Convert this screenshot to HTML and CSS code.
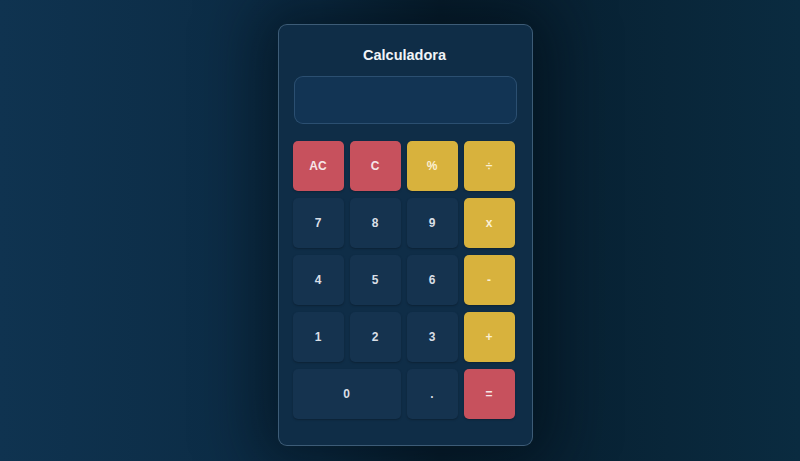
FILE: index.html
```html
<!DOCTYPE html>
<html lang="pt">
<head>
<meta charset="utf-8">
<title>Calculadora</title>
<link rel="stylesheet" href="styles.css">
</head>
<body>
<main class="stage">
  <section class="calc">
    <h1 class="title">Calculadora</h1>
    <div class="display"></div>
    <div class="keys">
      <button class="key red">AC</button>
      <button class="key red">C</button>
      <button class="key yellow">%</button>
      <button class="key yellow">÷</button>
      <button class="key">7</button>
      <button class="key">8</button>
      <button class="key">9</button>
      <button class="key yellow">x</button>
      <button class="key">4</button>
      <button class="key">5</button>
      <button class="key">6</button>
      <button class="key yellow">-</button>
      <button class="key">1</button>
      <button class="key">2</button>
      <button class="key">3</button>
      <button class="key yellow">+</button>
      <button class="key wide">0</button>
      <button class="key">.</button>
      <button class="key red">=</button>
    </div>
  </section>
</main>
</body>
</html>
```
FILE: styles.css
```css
* { box-sizing: border-box; }
html, body { margin: 0; height: 100%; }
body {
  font-family: "Liberation Sans", Arial, sans-serif;
  background: linear-gradient(90deg, #0f3350 0%, #0b2a42 40%, #071d2d 55%, #0a2b40 100%);
  overflow: hidden;
}
.stage {
  height: 461px;
  display: flex;
  justify-content: center;
  align-items: flex-start;
  padding-top: 24px;
  padding-left: 10px;
}
.calc {
  width: 255px;
  height: 422px;
  background: #0f2d47;
  border: 1px solid rgba(150, 180, 210, 0.35);
  border-radius: 9px;
  padding: 14px 15px 16px 14px;
  box-shadow: 0 0 60px 20px rgba(2, 12, 22, 0.55);
}
.title {
  margin: 8px 0 12px;
  text-align: center;
  color: #f1f4f7;
  font-size: 14.5px;
  font-weight: 700;
  line-height: 17px;
}
.display {
  height: 48px;
  margin: 0 0 17px 1px;
  background: #123454;
  border: 1px solid rgba(120, 160, 200, 0.25);
  border-radius: 9px;
}
.keys {
  display: grid;
  grid-template-columns: repeat(4, 51px);
  grid-auto-rows: 50px;
  gap: 7px 6px;
}
.key {
  border: none;
  border-radius: 5px;
  background: #15334f;
  color: #d9dfe6;
  font-family: "Liberation Sans", Arial, sans-serif;
  font-size: 12px;
  font-weight: 700;
  box-shadow: 0 1px 2px rgba(0, 0, 0, 0.25);
  padding: 0;
}
.key.red { background: #c7515d; color: #f6e6e8; }
.key.yellow { background: #d8b23d; color: #fbf0d4; }
.key.wide { grid-column: span 2; }
```
